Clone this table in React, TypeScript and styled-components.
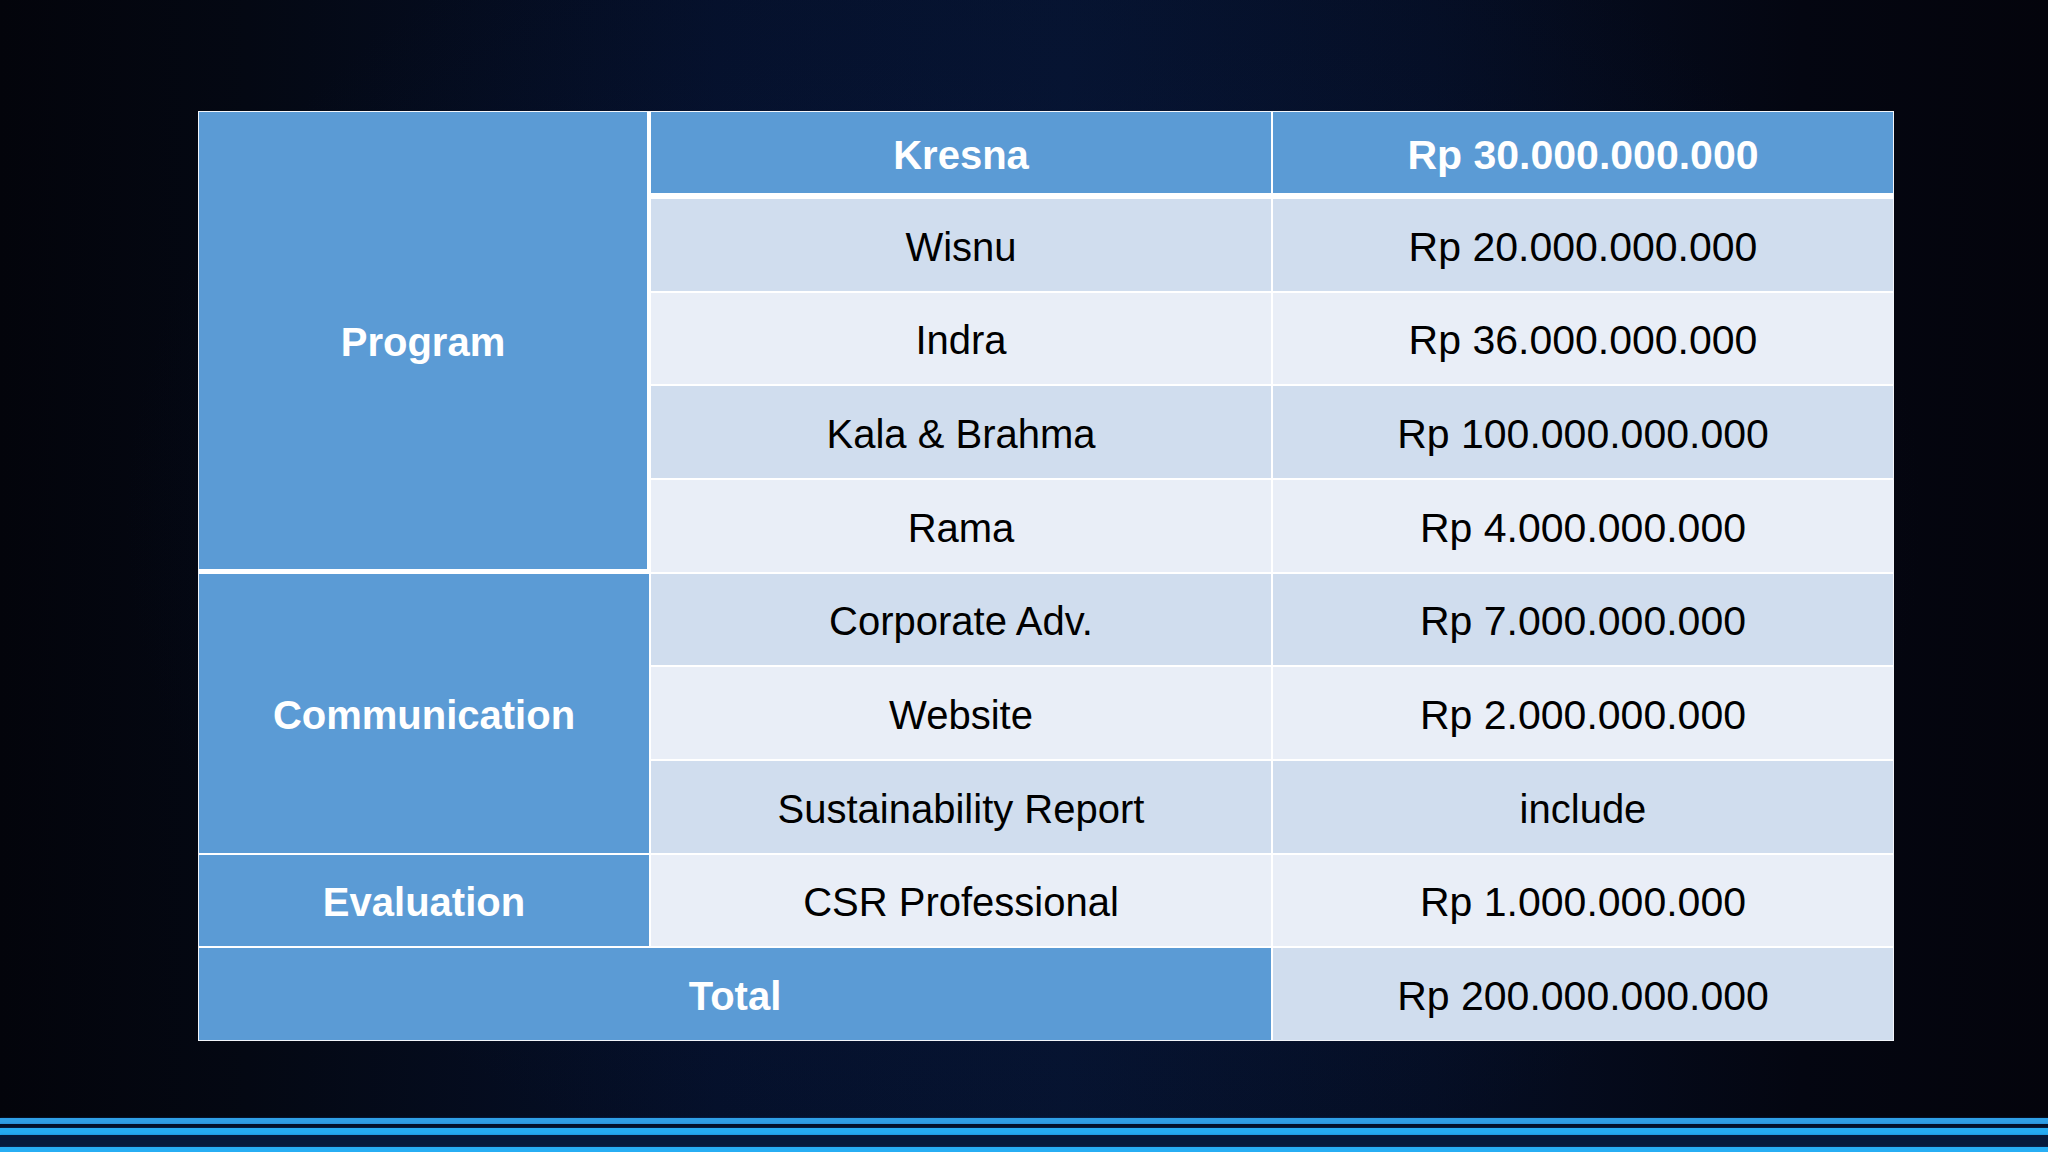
import { FC } from 'react'
import styled, { createGlobalStyle } from 'styled-components'

const GlobalStyle = createGlobalStyle`
  html, body {
    margin: 0;
    padding: 0;
    background: #03050d;
  }
  body {
    font-family: "Liberation Sans", Arial, sans-serif;
  }
`

type Tone = 'head' | 'dark' | 'light'

interface Row {
  label?: { text: string; span: number };
  item: string;
  value: string;
  tone: Tone;
  numeric?: boolean;
}

// urutan baris sesuai slide
const rows: Row[] = [
  { label: { text: 'Program', span: 5 }, item: 'Kresna', value: 'Rp 30.000.000.000', tone: 'head', numeric: true },
  { item: 'Wisnu', value: 'Rp 20.000.000.000', tone: 'dark', numeric: true },
  { item: 'Indra', value: 'Rp 36.000.000.000', tone: 'light', numeric: true },
  { item: 'Kala & Brahma', value: 'Rp 100.000.000.000', tone: 'dark', numeric: true },
  { item: 'Rama', value: 'Rp 4.000.000.000', tone: 'light', numeric: true },
  { label: { text: 'Communication', span: 3 }, item: 'Corporate Adv.', value: 'Rp 7.000.000.000', tone: 'dark', numeric: true },
  { item: 'Website', value: 'Rp 2.000.000.000', tone: 'light', numeric: true },
  { item: 'Sustainability Report', value: 'include', tone: 'dark' },
  { label: { text: 'Evaluation', span: 1 }, item: 'CSR Professional', value: 'Rp 1.000.000.000', tone: 'light', numeric: true },
]

const App: FC = () => {
  let line = 1
  return (
    <Slide>
      <GlobalStyle />
      <Stage>
        <Table>
          {rows.map((r) => {
            const at = line++
            return [
              r.label && (
                <Cell
                  key={`l${at}`}
                  $tone="head"
                  $col="1"
                  $row={`${at} / span ${r.label.span}`}
                  $thick={r.label.text === 'Program'}
                >
                  {r.label.text}
                </Cell>
              ),
              <Cell key={`i${at}`} $tone={r.tone} $col="2" $row={`${at}`}>
                {r.item}
              </Cell>,
              <Cell key={`v${at}`} $tone={r.tone} $col="3" $row={`${at}`}>
                {r.numeric ? <Num>{r.value}</Num> : r.value}
              </Cell>,
            ]
          })}
          <Cell $tone="head" $col="1 / span 2" $row="10">Total</Cell>
          <Cell $tone="dark" $col="3" $row="10"><Num>Rp 200.000.000.000</Num></Cell>
        </Table>
      </Stage>
      <Stripes>
        <Stripe $h={6} $c="#2f9fe6" />
        <Stripe $h={4} $c="#03112a" />
        <Stripe $h={7} $c="#25abf2" />
        <Stripe $h={12} $c="#061a3c" />
        <Stripe $h={5} $c="#27aef4" />
      </Stripes>
    </Slide>
  )
}

export default App

const Slide = styled.div`
  width: 2048px;
  height: 1152px;
  display: flex;
  flex-direction: column;
  overflow: hidden;
  background:
    radial-gradient(ellipse 900px 700px at 50% 45%, rgba(8, 24, 62, 0.55), rgba(8, 24, 62, 0) 100%),
    linear-gradient(90deg, #03040b 0%, #040813 12%, #05102a 35%, #06132f 52%, #050e24 70%, #040611 88%, #04040c 100%);
`

const Stage = styled.div`
  flex: 1;
  padding: 111px 0 0 198px;
`

const Table = styled.div`
  width: 1694px;
  height: 928px;
  border: 1px solid #f2f5fa;
  background: #ffffff;
  display: grid;
  grid-template-columns: 450px 620px 620px;
  grid-template-rows: 85px repeat(9, 1fr);
  gap: 2px;
`

const toneBg: Record<Tone, string> = {
  head: '#5b9bd5',
  dark: '#d0ddee',
  light: '#e9eef7',
}

const Cell = styled.div<{ $tone: Tone; $col: string; $row: string; $thick?: boolean }>`
  grid-column: ${({ $col }) => $col};
  grid-row: ${({ $row }) => $row};
  display: flex;
  align-items: center;
  justify-content: center;
  padding-top: 5px;
  background: ${({ $tone }) => toneBg[$tone]};
  color: ${({ $tone }) => ($tone === 'head' ? '#ffffff' : '#000000')};
  font-weight: ${({ $tone }) => ($tone === 'head' ? 700 : 400)};
  font-size: 40px;
  white-space: nowrap;
  margin-right: ${({ $thick }) => ($thick ? '2px' : '0')};
  margin-bottom: ${({ $thick, $tone, $row }) => ($thick ? '3px' : $tone === 'head' && $row === '1' ? '4px' : '0')};
`

const Num = styled.span`
  display: inline-block;
  font-family: "Liberation Sans Narrow", "Arial Narrow", "Liberation Sans", sans-serif;
  font-size: 41px;
`

const Stripes = styled.div`
  display: flex;
  flex-direction: column;
`

const Stripe = styled.div<{ $h: number; $c: string }>`
  height: ${({ $h }) => $h}px;
  background: ${({ $c }) => $c};
  box-shadow: 0 0 2px rgba(20, 90, 170, 0.6);
`
